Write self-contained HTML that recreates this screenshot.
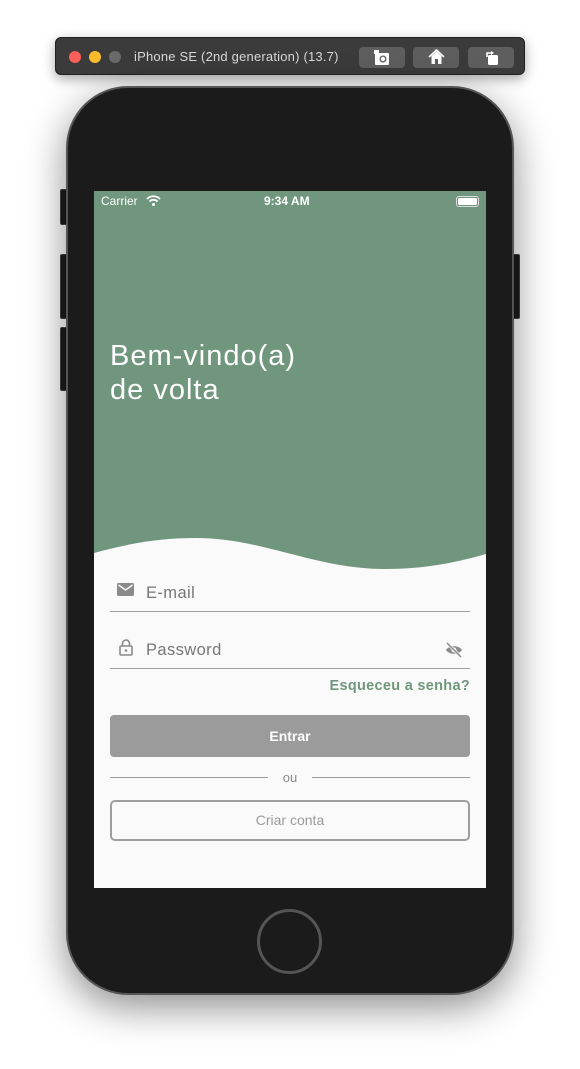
<!DOCTYPE html>
<html><head><meta charset="utf-8"><style>
*{margin:0;padding:0;box-sizing:border-box}
body{width:580px;height:1069px;background:#fff;position:relative;overflow:hidden;font-family:"Liberation Sans",sans-serif}
.tb{position:absolute;left:55px;top:37px;width:470px;height:38px;background:#3b3b3b;border-radius:6px;box-shadow:0 4px 12px rgba(0,0,0,.35);border:1px solid #222}
.dot{position:absolute;top:13px;width:12px;height:12px;border-radius:50%}
.tbt{position:absolute;left:78px;top:11px;color:#d8d8d8;font-size:13px;letter-spacing:.2px}
.btn{position:absolute;top:9px;width:46px;height:21px;background:#5e5e5e;border-radius:4px}
.phone{position:absolute;left:66px;top:86px;width:448px;height:909px;background:#1b1b1b;border-radius:62px;border:2px solid #555;box-shadow:0 12px 40px rgba(0,0,0,.45)}
.side{position:absolute;background:#1b1b1b;border:1px solid #444;border-radius:2px}
.screen{position:absolute;left:94px;top:191px;width:392px;height:697px;background:#fafafa;overflow:hidden}
.home{position:absolute;left:257px;top:909px;width:65px;height:65px;border-radius:50%;border:3px solid #555}
.sb{position:absolute;top:3px;color:#fff;font-size:12px}
.title{position:absolute;left:16px;top:148px;color:#fff;font-size:29px;line-height:34px;letter-spacing:1px}
.field{position:absolute;left:16px;width:360px;border-bottom:1.5px solid #9e9e9e;height:36px}
.ph{position:absolute;left:36px;top:8px;font-size:16.5px;color:#777;letter-spacing:.4px}
</style></head><body>
<div class="tb">
<div class="dot" style="left:13px;background:#fc5f57"></div>
<div class="dot" style="left:33px;background:#fdbc2e"></div>
<div class="dot" style="left:53px;background:#6a6a6a"></div>
<div class="tbt">iPhone SE (2nd generation) (13.7)</div>
<div class="btn" style="left:303px"></div>
<div class="btn" style="left:357px"></div>
<div class="btn" style="left:412px"></div>
<svg style="position:absolute;left:317px;top:11px" width="18" height="17" viewBox="0 0 18 17"><rect x="2" y="4" width="14" height="12" rx="1" fill="#fff"/><rect x="1" y="1" width="5" height="4" fill="#fff"/><circle cx="10" cy="10" r="3.5" fill="#5e5e5e"/><circle cx="10" cy="10" r="2.2" fill="#fff"/></svg>
<svg style="position:absolute;left:372px;top:11px" width="17" height="16" viewBox="0 0 17 16"><path d="M1 8 L8.5 1 L16 8" stroke="#fff" stroke-width="1.6" fill="none"/><path d="M3.5 7 V15 H13.5 V7 L8.5 2.5Z" fill="#fff"/><rect x="7" y="10" width="3" height="5" fill="#5e5e5e"/></svg>
<svg style="position:absolute;left:428px;top:11px" width="16" height="17" viewBox="0 0 16 17"><rect x="4" y="6" width="10" height="10" rx="1.5" fill="#fff"/><path d="M3 8 V4 H8" stroke="#fff" stroke-width="1.6" fill="none"/><path d="M7 2 L10 4 L7 6Z" fill="#fff"/></svg>
</div>
<div class="side" style="left:60px;top:189px;width:8px;height:36px"></div>
<div class="side" style="left:60px;top:254px;width:8px;height:65px"></div>
<div class="side" style="left:60px;top:327px;width:8px;height:64px"></div>
<div class="side" style="left:512px;top:254px;width:8px;height:65px"></div>
<div class="phone"></div>
<div class="home"></div>
<div class="screen">
<svg style="position:absolute;left:0;top:0" width="392" height="400"><path d="M0,362 C40,351 70,347 101,347 C170,347 220,378 291,378 C330,378 360,372 392,363 L392,0 L0,0 Z" fill="#70967d"/></svg>
<div class="sb" style="left:7px">Carrier</div>
<svg style="position:absolute;left:52px;top:4px" width="15" height="11" viewBox="0 0 15 11"><path d="M1 4 A9 9 0 0 1 14 4" stroke="#fff" stroke-width="1.8" fill="none"/><path d="M3.5 6.5 A5.5 5.5 0 0 1 11.5 6.5" stroke="#fff" stroke-width="1.8" fill="none"/><circle cx="7.5" cy="9.5" r="1.5" fill="#fff"/></svg>
<div class="sb" style="left:170px;font-weight:bold">9:34 AM</div>
<div style="position:absolute;left:362px;top:5px;width:23px;height:11px;border:1px solid #ddd;border-radius:3px;padding:1px"><div style="background:#fff;width:100%;height:100%;border-radius:1.5px"></div></div>
<div class="title">Bem-vindo(a)<br>de volta</div>
<div class="field" style="top:385px">
<svg style="position:absolute;left:7px;top:7px" width="17" height="14" viewBox="0 0 17 14"><rect x="0" y="0" width="17" height="13" rx="1.5" fill="#8a8a8a"/><path d="M1.5 2 L8.5 7 L15.5 2" stroke="#fafafa" stroke-width="1.5" fill="none"/></svg>
<div class="ph">E-mail</div></div>
<div class="field" style="top:442px">
<svg style="position:absolute;left:9px;top:6px" width="14" height="17" viewBox="0 0 14 17"><path d="M3.5 7 V4.5 A3.5 3.5 0 0 1 10.5 4.5 V7" stroke="#8a8a8a" stroke-width="1.6" fill="none"/><rect x="1" y="7" width="12" height="9" rx="1.2" stroke="#8a8a8a" stroke-width="1.6" fill="none"/><circle cx="7" cy="11.5" r="1.3" fill="#8a8a8a"/></svg>
<div class="ph">Password</div>
<svg style="position:absolute;left:335px;top:9px" width="18" height="16" viewBox="0 0 18 16"><path d="M1 8 C4 3 14 3 17 8 C14 13 4 13 1 8Z" fill="#8a8a8a"/><circle cx="9" cy="8" r="2.5" fill="#fafafa"/><path d="M2 1 L16 15" stroke="#fafafa" stroke-width="3"/><path d="M2 1 L16 15" stroke="#8a8a8a" stroke-width="1.5"/></svg>
</div>
<div style="position:absolute;right:16px;top:487px;color:#70967d;font-weight:bold;font-size:14.5px;letter-spacing:.3px">Esqueceu a senha?</div>
<div style="position:absolute;left:16px;top:524px;width:360px;height:42px;background:#9b9b9b;border-radius:4px;color:#fff;font-weight:bold;font-size:14px;text-align:center;line-height:42px">Entrar</div>
<div style="position:absolute;left:16px;top:586px;width:158px;border-top:1px solid #9e9e9e"></div>
<div style="position:absolute;left:218px;top:586px;width:158px;border-top:1px solid #9e9e9e"></div>
<div style="position:absolute;left:0;width:392px;top:579px;text-align:center;color:#8a8a8a;font-size:13px">ou</div>
<div style="position:absolute;left:16px;top:609px;width:360px;height:41px;border:2px solid #9e9e9e;border-radius:5px;color:#9a9a9a;font-size:14px;text-align:center;line-height:37px">Criar conta</div>
</div>
</body></html>
